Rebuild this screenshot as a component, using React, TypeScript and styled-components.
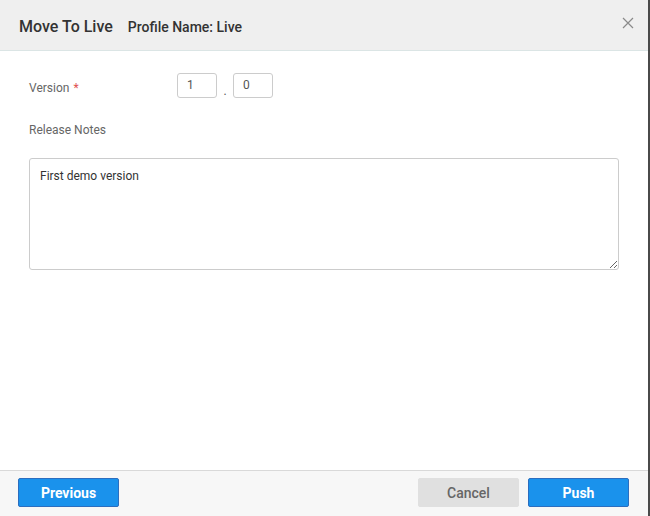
import React from "react";
import styled, { createGlobalStyle } from "styled-components";

const GlobalStyle = createGlobalStyle`
  html, body {
    margin: 0;
    padding: 0;
    background: #ffffff;
    font-family: Roboto, "Liberation Sans", Arial, sans-serif;
  }
  * { box-sizing: border-box; }
`;

const Modal = styled.div`
  width: 650px;
  height: 516px;
  display: flex;
  flex-direction: column;
  background: #ffffff;
  border-right: 2px solid #4a4a4a;
`;

const Header = styled.div`
  height: 51px;
  display: flex;
  align-items: center;
  padding: 3px 12px 0 19px;
  background: #efefef;
  border-bottom: 1px solid #dbe5e5;
`;

const Title = styled.h2`
  margin: 0;
  font-size: 16px;
  font-weight: 500;
  color: #333333;
`;

const Subtitle = styled.span`
  margin-left: 15px;
  font-size: 14px;
  font-weight: 500;
  color: #333333;
`;

const CloseButton = styled.button`
  margin-left: auto;
  width: 14px;
  height: 14px;
  padding: 0;
  border: none;
  background: none;
  display: flex;
  cursor: pointer;
  margin-top: -5px;
`;

const Body = styled.div`
  flex: 1;
  padding: 22px 31px 0 29px;
`;

const Row = styled.div`
  display: flex;
  align-items: center;
`;

const Label = styled.label`
  font-size: 12px;
  color: #666666;
  width: 148px;
  padding-top: 5px;
`;

const Required = styled.span`
  color: #e05050;
  margin-left: 4px;
`;

const VersionBox = styled.input`
  width: 40px;
  height: 25px;
  border: 1px solid #cccccc;
  border-radius: 3px;
  padding: 0 0 2px 9px;
  font-family: inherit;
  font-size: 12px;
  color: #555555;
  outline: none;
`;

const Dot = styled.span`
  width: 16px;
  text-align: center;
  font-size: 12px;
  color: #555555;
  padding-top: 10px;
`;

const NotesLabel = styled(Label)`
  display: block;
  width: auto;
  padding-top: 0;
  margin-top: 25px;
`;

const Notes = styled.textarea`
  display: block;
  margin-top: 21px;
  width: 590px;
  height: 112px;
  border: 1px solid #cccccc;
  border-radius: 3px;
  padding: 10px 10px;
  font-family: inherit;
  font-size: 12px;
  color: #333333;
  resize: both;
  outline: none;
`;

const Footer = styled.div`
  height: 46px;
  display: flex;
  align-items: center;
  padding: 0 19px 2px 18px;
  background: #f7f7f7;
  border-top: 1px solid #d9d9d9;
  gap: 9px;
`;

const Button = styled.button<{ $variant?: "primary" | "muted" }>`
  width: 101px;
  height: 29px;
  border-radius: 2px;
  font-family: inherit;
  font-size: 14px;
  font-weight: ${(p) => (p.$variant === "muted" ? 500 : 700)};
  cursor: pointer;
  background: ${(p) => (p.$variant === "muted" ? "#e0e0e0" : "#1a92ec")};
  color: ${(p) => (p.$variant === "muted" ? "#666666" : "#ffffff")};
  border: 1px solid ${(p) => (p.$variant === "muted" ? "#e0e0e0" : "#2c6ebf")};
`;

const Spacer = styled.div`
  flex: 1;
`;

export default function App() {
  return (
    <>
      <GlobalStyle />
      <Modal>
        <Header>
          <Title>Move To Live</Title>
          <Subtitle>Profile Name: Live</Subtitle>
          <CloseButton aria-label="Close">
            <svg width="12" height="12" viewBox="0 0 12 12">
              <path d="M1 1L11 11M11 1L1 11" stroke="#8a8a8a" strokeWidth="1.2" fill="none" />
            </svg>
          </CloseButton>
        </Header>
        <Body>
          <Row>
            <Label>
              Version<Required>*</Required>
            </Label>
            <VersionBox defaultValue="1" />
            <Dot>.</Dot>
            <VersionBox defaultValue="0" />
          </Row>
          <NotesLabel>Release Notes</NotesLabel>
          <Notes defaultValue="First demo version" />
        </Body>
        <Footer>
          <Button>Previous</Button>
          <Spacer />
          <Button $variant="muted">Cancel</Button>
          <Button>Push</Button>
        </Footer>
      </Modal>
    </>
  );
}
